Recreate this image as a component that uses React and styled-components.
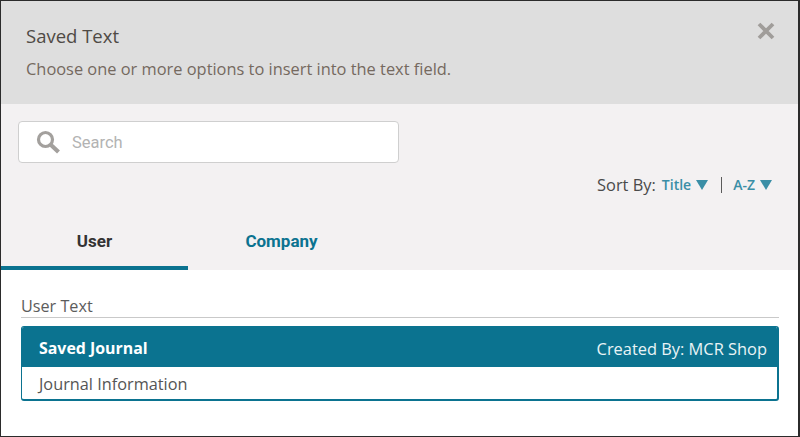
import React from 'react';
import styled, { createGlobalStyle } from 'styled-components';

const GlobalStyle = createGlobalStyle`
	html, body {
		margin: 0;
		padding: 0;
		background: #fff;
	}
	* {
		box-sizing: border-box;
	}
`;

const Modal = styled.div`
	width: 800px;
	height: 437px;
	border: 1px solid #2b2b2b;
	border-right-width: 2px;
	background: #fff;
	display: flex;
	flex-direction: column;
	font-family: 'Open Sans', sans-serif;
	overflow: hidden;
`;

const Header = styled.header`
	height: 103px;
	flex: none;
	background: #dedede;
	padding: 22px 23px 0 25px;
	display: flex;
	justify-content: space-between;
	align-items: flex-start;
`;

const Title = styled.h1`
	margin: 0;
	font-size: 18.5px;
	line-height: 25px;
	font-weight: 400;
	color: #4f4a45;
`;

const Subtitle = styled.p`
	margin: 10px 0 0;
	font-size: 16.4px;
	line-height: 22px;
	color: #75695f;
`;

const CloseButton = styled.button`
	appearance: none;
	border: none;
	background: transparent;
	padding: 0;
	margin-top: -1px;
	width: 18px;
	height: 20px;
	display: flex;
	color: #a09d9a;
`;

const Toolbar = styled.div`
	height: 166px;
	flex: none;
	background: #f3f1f2;
	display: flex;
	flex-direction: column;
`;

const SearchBox = styled.label`
	width: 381px;
	height: 42px;
	margin: 17px 0 0 17px;
	background: #fff;
	border: 1px solid #cfcfcf;
	border-radius: 4px;
	padding-left: 17px;
	display: flex;
	align-items: center;
	gap: 9px;
	flex: none;
`;

const SearchInput = styled.input`
	border: none;
	outline: none;
	background: transparent;
	flex: 1;
	min-width: 0;
	padding: 0 2px;
	font-family: Roboto, sans-serif;
	font-size: 16.5px;
	color: #333;
	&::placeholder {
		color: #b3b3b3;
		opacity: 1;
	}
`;

const SortRow = styled.div`
	height: 20px;
	margin-top: 11px;
	padding-right: 26px;
	display: flex;
	justify-content: flex-end;
	align-items: center;
	flex: none;
`;

const SortLabel = styled.span`
	font-size: 16.4px;
	color: #4a4a4a;
	margin-right: 6px;
`;

const SortLink = styled.a`
	font-size: 14px;
	font-weight: 600;
	color: #3a8ea6;
	display: flex;
	align-items: center;
	gap: 5px;
	padding-top: 1px;
`;

const Arrow = styled.span`
	width: 0;
	height: 0;
	border-left: 6px solid transparent;
	border-right: 6px solid transparent;
	border-top: 10px solid #3a8ea6;
`;

const Divider = styled.span`
	width: 1px;
	height: 16px;
	background: #5a5a5a;
	margin: 1px 11px 0 13px;
`;

const Tabs = styled.nav`
	margin-top: auto;
	display: flex;
	height: 50px;
	flex: none;
`;

const Tab = styled.a`
	width: 187px;
	display: flex;
	align-items: center;
	justify-content: center;
	padding-bottom: 5px;
	font-family: Roboto, sans-serif;
	font-size: 17px;
	font-weight: 700;
	color: ${p => (p.$active ? '#333' : '#0b7390')};
	border-bottom: 4px solid ${p => (p.$active ? '#0b7390' : 'transparent')};
`;

const Content = styled.section`
	flex: 1;
	padding: 25px 19px 0 20px;
`;

const SectionTitle = styled.h2`
	margin: 0;
	font-size: 16.2px;
	line-height: 22px;
	font-weight: 400;
	color: #5c5c5c;
	border-bottom: 1px solid #c9c9c9;
`;

const Card = styled.article`
	margin-top: 8px;
	border: 1px solid #0b7390;
	border-bottom-width: 2px;
	border-right-width: 2px;
	border-radius: 3px;
	overflow: hidden;
`;

const CardHeader = styled.div`
	height: 40px;
	background: #0b7390;
	color: #fff;
	padding: 2px 10px 0 17px;
	display: flex;
	justify-content: space-between;
	align-items: center;
`;

const CardName = styled.span`
	font-size: 15.9px;
	font-weight: 700;
`;

const CardAuthor = styled.span`
	font-size: 16.4px;
	color: #e9f3f6;
`;

const CardBody = styled.div`
	height: 32px;
	padding: 2px 0 0 17px;
	display: flex;
	align-items: center;
	font-size: 16.3px;
	color: #555;
`;

const SearchIcon = () => (
	<svg width="25" height="25" viewBox="0 0 25 25" fill="none">
		<circle cx="9.5" cy="9.5" r="7" stroke="#a3a09d" strokeWidth="3.2" />
		<path d="M15 15 L22.5 22" stroke="#a3a09d" strokeWidth="4.2" />
	</svg>
);

const CloseIcon = () => (
	<svg width="18" height="18" viewBox="0 0 18 18" fill="none">
		<path d="M2 2 L16 16 M16 2 L2 16" stroke="currentColor" strokeWidth="3.8" />
	</svg>
);

const App = () => (
	<>
		<GlobalStyle />
		<Modal>
			<Header>
				<div>
					<Title>Saved Text</Title>
					<Subtitle>Choose one or more options to insert into the text field.</Subtitle>
				</div>
				<CloseButton aria-label="Close">
					<CloseIcon />
				</CloseButton>
			</Header>
			<Toolbar>
				<SearchBox>
					<SearchIcon />
					<SearchInput placeholder="Search" />
				</SearchBox>
				<SortRow>
					<SortLabel>Sort By:</SortLabel>
					<SortLink>
						Title <Arrow />
					</SortLink>
					<Divider />
					<SortLink>
						A-Z <Arrow />
					</SortLink>
				</SortRow>
				<Tabs>
					<Tab $active>User</Tab>
					<Tab>Company</Tab>
				</Tabs>
			</Toolbar>
			<Content>
				<SectionTitle>User Text</SectionTitle>
				<Card>
					<CardHeader>
						<CardName>Saved Journal</CardName>
						<CardAuthor>Created By: MCR Shop</CardAuthor>
					</CardHeader>
					<CardBody>Journal Information</CardBody>
				</Card>
			</Content>
		</Modal>
	</>
);

export default App;
